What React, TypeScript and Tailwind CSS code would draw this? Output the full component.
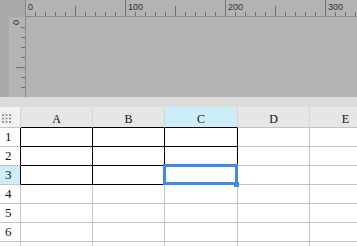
import React from "react";

const cols = ["A", "B", "C", "D", "E"];
const rows = [1, 2, 3, 4, 5, 6, 7];

function HRuler() {
  const ticks: React.ReactNode[] = [];
  for (let v = 0; v <= 330; v += 10) {
    const x = v - 0.5;
    if (v % 100 === 0) {
      if (v > 0) ticks.push(<line key={v} x1={x} y1={0} x2={x} y2={16} stroke="#707070" strokeWidth={1} />);
      ticks.push(
        <text key={"t" + v} x={v + 2} y={10} fontSize={9} fill="#333" fontFamily="'Liberation Sans', Arial, sans-serif">
          {v}
        </text>
      );
    } else if (v % 50 === 0) {
      ticks.push(<line key={v} x1={x} y1={6} x2={x} y2={16} stroke="#707070" strokeWidth={1} />);
    } else {
      ticks.push(<line key={v} x1={x} y1={12} x2={x} y2={16} stroke="#707070" strokeWidth={1} />);
    }
  }
  return (
    <svg width={331} height={16} className="block">
      {ticks}
    </svg>
  );
}

function VRuler() {
  const ticks: React.ReactNode[] = [];
  for (let v = 10; v <= 80; v += 10) {
    const y = v + 0.5;
    if (v % 50 === 0) {
      ticks.push(<line key={v} x1={7} y1={y} x2={16} y2={y} stroke="#707070" strokeWidth={1} />);
    } else {
      ticks.push(<line key={v} x1={12} y1={y} x2={16} y2={y} stroke="#707070" strokeWidth={1} />);
    }
  }
  return (
    <svg width={16} height={79} className="block">
      <text
        x={2}
        y={3}
        fontSize={9}
        fill="#333"
        fontFamily="'Liberation Sans', Arial, sans-serif"
        transform="rotate(90 2 3) translate(0 -2)"
      >
        0
      </text>
      {ticks}
    </svg>
  );
}

function CornerDots() {
  const dots: React.ReactNode[] = [];
  for (let r = 0; r < 3; r++)
    for (let c = 0; c < 3; c++)
      dots.push(<rect key={`${r}${c}`} x={1 + c * 3.5} y={r * 3.5} width={2} height={2} fill="#9a9a9a" />);
  return (
    <svg width={12} height={10} className="block">
      {dots}
    </svg>
  );
}

export default function App() {
  const colW = ["w-[72px]", "w-[72px]", "w-[73px]", "w-[72px]", "w-[72px]"];
  return (
    <div className="w-[357px] h-[246px] overflow-hidden bg-white font-['Liberation_Serif',serif]">
      {/* top ruler area */}
      <div className="h-[97px] flex flex-col bg-[#b4b4b4]">
        <div className="flex h-[17px]">
          <div className="w-[26px] h-[17px] bg-[#a9a9a9] border-r border-[#8a8a8a]" />
          <div className="flex-1 h-[17px] border-b border-[#8a8a8a] overflow-hidden">
            <HRuler />
          </div>
        </div>
        <div className="flex flex-1">
          <div className="w-[9px] bg-[#a9a9a9]" />
          <div className="w-[17px] border-r border-[#8a8a8a] overflow-hidden">
            <VRuler />
          </div>
          <div className="flex-1" />
        </div>
      </div>
      <div className="h-[10px] bg-[#dcdcdc]" />
      {/* grid */}
      <div className="relative">
        <div className="flex">
          <div className="w-[21px] h-[21px] shrink-0 bg-[#f3f3f3] border-r border-b border-r-[#d6d6d6] border-b-[#c4c4c4] flex items-start pt-[7px] pl-[1px]">
            <CornerDots />
          </div>
          {cols.map((c, i) => (
            <div
              key={c}
              className={`${colW[i]} h-[21px] shrink-0 border-r border-b border-r-[#d6d6d6] ${
                i < 3 ? "border-b-black" : "border-b-[#c4c4c4]"
              } ${c === "C" ? "bg-[#cdeef9]" : "bg-[#e6e6e6]"} flex justify-center pt-[5px] font-['Liberation_Serif',serif] text-[12px] leading-[14px] text-[#111]`}
            >
              {c}
            </div>
          ))}
        </div>
        {rows.map((r) => (
          <div key={r} className="flex">
            <div
              className={`w-[21px] h-[19px] shrink-0 border-r border-b border-b-[#c4c4c4] ${
                r <= 3 ? "border-r-black" : "border-r-[#c4c4c4]"
              } ${r === 3 ? "bg-[#cdeef9]" : "bg-white"} flex items-center pl-[5px] font-['Liberation_Serif',serif] text-[13px] leading-[14px] text-[#111]`}
            >
              {r < 7 ? r : ""}
            </div>
            {cols.map((c, i) => {
              const inTable = r <= 3 && i < 3;
              return (
                <div
                  key={c}
                  className={`${colW[i]} h-[19px] shrink-0 border-r border-b ${
                    inTable ? "border-r-black border-b-black" : "border-r-[#c4c4c4] border-b-[#c4c4c4]"
                  }`}
                />
              );
            })}
          </div>
        ))}
        {/* selection */}
        <div className="absolute left-[163px] top-[57px] w-[75px] h-[21px] border-[3px] border-[#3b8beb]" />
        <div className="absolute left-[234px] top-[75px] w-[5px] h-[5px] bg-[#3b8beb]" />
      </div>
    </div>
  );
}
